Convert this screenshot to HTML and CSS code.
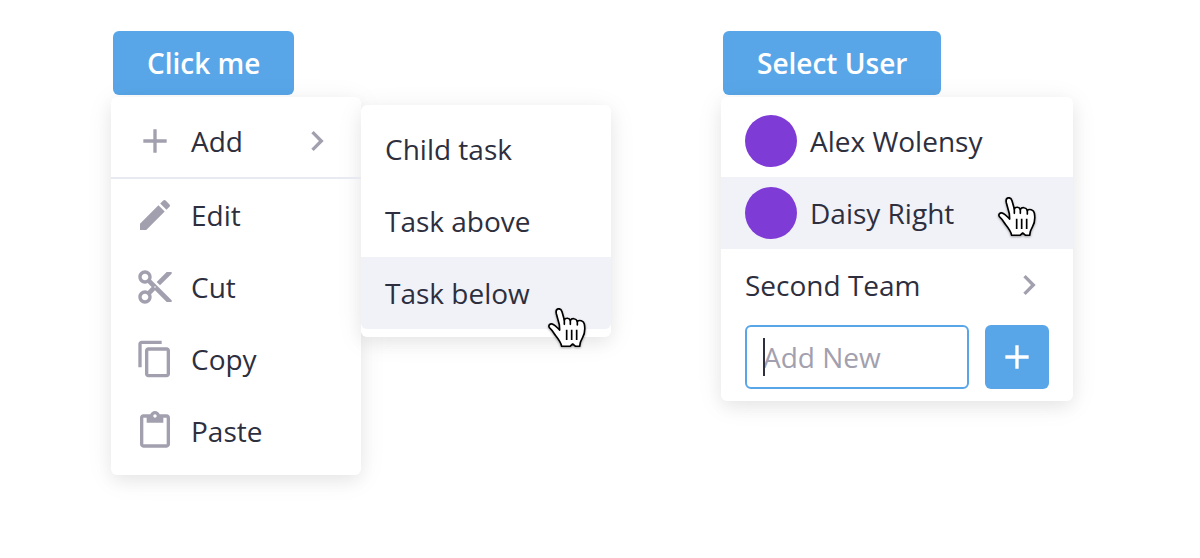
FILE: index.html
```html
<!DOCTYPE html>
<html lang="en">
<head>
    <meta charset="UTF-8">
    <meta name="viewport" content="width=device-width, initial-scale=1.0">
    <title>Dropdown menus</title>
    <link rel="stylesheet" href="styles.css">
</head>
<body>
    <!-- shared icons -->
    <svg class="sprite" aria-hidden="true">
        <symbol id="icon-plus" viewBox="0 0 24 24">
            <path d="M19 13h-6v6h-2v-6H5v-2h6V5h2v6h6z"/>
        </symbol>
        <symbol id="icon-chevron" viewBox="0 0 24 24">
            <path d="M8.59 16.59L13.17 12 8.59 7.41 10 6l6 6-6 6z"/>
        </symbol>
        <symbol id="icon-hand" viewBox="20 20 120 120">
            <path d="M48 40C44 23 61 21 65 34L72 59C75 52 87 52 90 60C94 53 107 53 111 63C117 58 130 61 132 71C135 88 133 101 127 111C121 121 118 127 118 138H106L97 131L89 138H64C62 126 53 115 45 105C40 97 36 90 30 85C20 77 29 67 40 73C47 77 51 83 58 89L57 73Z" fill="#fff" stroke="#000" stroke-width="5" stroke-linejoin="round"/>
            <path d="M72 58v14M90 59v13M111 63v11" fill="none" stroke="#000" stroke-width="5" stroke-linecap="round"/>
            <path d="M79 88v31M94 88v31M109 88v31" fill="none" stroke="#000" stroke-width="5"/>
        </symbol>
    </svg>

    <main class="demos">
        <section class="dropdown">
            <button type="button" class="btn">Click me</button>
            <div class="menus">
                <ul class="menu">
                    <li class="separated">
                        <button type="button" class="item">
                            <svg class="icon"><use href="#icon-plus"/></svg>
                            <span class="label">Add</span>
                            <svg class="icon"><use href="#icon-chevron"/></svg>
                        </button>
                    </li>
                    <li>
                        <button type="button" class="item">
                            <svg class="icon" viewBox="0 0 24 24"><path d="M3 17.25V21h3.75L17.81 9.94l-3.75-3.75L3 17.25zM20.71 7.04a.996.996 0 0 0 0-1.41l-2.34-2.34a.996.996 0 0 0-1.41 0l-1.83 1.83 3.75 3.75 1.83-1.83z"/></svg>
                            <span class="label">Edit</span>
                        </button>
                    </li>
                    <li>
                        <button type="button" class="item">
                            <svg class="icon" viewBox="0 0 24 24"><path d="M9.64 7.64c.23-.5.36-1.05.36-1.64 0-2.21-1.79-4-4-4S2 3.79 2 6s1.79 4 4 4c.59 0 1.14-.13 1.64-.36L10 12l-2.36 2.36C7.14 14.13 6.59 14 6 14c-2.21 0-4 1.79-4 4s1.79 4 4 4 4-1.79 4-4c0-.59-.13-1.14-.36-1.64L12 14l7 7h3v-1L9.64 7.64zM6 8c-1.1 0-2-.89-2-2s.9-2 2-2 2 .89 2 2-.9 2-2 2zm0 12c-1.1 0-2-.89-2-2s.9-2 2-2 2 .89 2 2-.9 2-2 2zm6-7.5c-.28 0-.5-.22-.5-.5s.22-.5.5-.5.5.22.5.5-.22.5-.5.5zM19 3l-6 6 2 2 7-7V3z"/></svg>
                            <span class="label">Cut</span>
                        </button>
                    </li>
                    <li>
                        <button type="button" class="item">
                            <svg class="icon" viewBox="0 0 24 24"><path d="M16 1H4c-1.1 0-2 .9-2 2v14h2V3h12V1zm3 4H8c-1.1 0-2 .9-2 2v14c0 1.1.9 2 2 2h11c1.1 0 2-.9 2-2V7c0-1.1-.9-2-2-2zm0 16H8V7h11v14z"/></svg>
                            <span class="label">Copy</span>
                        </button>
                    </li>
                    <li>
                        <button type="button" class="item">
                            <svg class="icon" viewBox="0 0 24 24"><path d="M19 2h-4.18C14.4.84 13.3 0 12 0c-1.3 0-2.4.84-2.82 2H5c-1.1 0-2 .9-2 2v16c0 1.1.9 2 2 2h14c1.1 0 2-.9 2-2V4c0-1.1-.9-2-2-2zm-7 0c.55 0 1 .45 1 1s-.45 1-1 1-1-.45-1-1 .45-1 1-1zm7 18H5V4h2v3h10V4h2v16z"/></svg>
                            <span class="label">Paste</span>
                        </button>
                    </li>
                </ul>
                <ul class="menu submenu">
                    <li><button type="button" class="item"><span class="label">Child task</span></button></li>
                    <li><button type="button" class="item"><span class="label">Task above</span></button></li>
                    <li>
                        <button type="button" class="item active rounded"><span class="label">Task below</span></button>
                        <svg class="pointer pointer-low"><use href="#icon-hand"/></svg>
                    </li>
                </ul>
            </div>
        </section>

        <section class="dropdown">
            <button type="button" class="btn">Select User</button>
            <div class="menu menu-wide">
                <ul class="list">
                    <li>
                        <button type="button" class="item user">
                            <span class="avatar"></span>
                            <span class="label">Alex Wolensy</span>
                        </button>
                    </li>
                    <li>
                        <button type="button" class="item user active">
                            <span class="avatar"></span>
                            <span class="label">Daisy Right</span>
                        </button>
                        <svg class="pointer pointer-mid"><use href="#icon-hand"/></svg>
                    </li>
                    <li>
                        <button type="button" class="item">
                            <span class="label">Second Team</span>
                            <svg class="icon"><use href="#icon-chevron"/></svg>
                        </button>
                    </li>
                </ul>
                <form class="add-form">
                    <div class="field">
                        <input type="text" placeholder="Add New" aria-label="Add new">
                        <span class="caret"></span>
                    </div>
                    <button type="button" class="btn btn-icon" aria-label="Add">
                        <svg class="icon"><use href="#icon-plus"/></svg>
                    </button>
                </form>
            </div>
        </section>
    </main>
</body>
</html>
```
FILE: styles.css
```css
* {
    box-sizing: border-box;
}
body {
    margin: 0;
    background-color: #fff;
    color: #2e2f3e;
    font-family: "Open Sans", "Noto Sans", sans-serif;
    font-size: 28px;
    line-height: 38px;
}
button,
input {
    font: inherit;
    color: inherit;
}
.sprite {
    position: absolute;
    width: 0;
    height: 0;
}
.demos {
    display: flex;
    flex-wrap: wrap;
    align-items: flex-start;
    gap: 32px 110px;
    padding: 31px 24px 32px 111px;
}
.btn {
    display: block;
    height: 64px;
    margin: 0 0 2px 2px;
    padding: 0 34px;
    border: none;
    border-radius: 6px;
    background-color: #58a6e8;
    color: #fff;
    font-weight: 600;
    cursor: pointer;
}
.menus {
    display: flex;
    align-items: flex-start;
}
.menu {
    width: 250px;
    margin: 0;
    padding: 8px 0;
    list-style: none;
    border-radius: 6px;
    background-color: #fff;
    box-shadow: 0 6px 16px rgba(0, 0, 0, 0.05), 0 4px 28px rgba(0, 0, 0, 0.07);
}
.menu-wide {
    width: 352px;
    padding-bottom: 12px;
}
.submenu {
    margin-top: 8px;
}
.list {
    margin: 0;
    padding: 0;
    list-style: none;
}
.menu li {
    position: relative;
}
.separated {
    border-bottom: 2px solid #e8eaf1;
}
.item {
    display: flex;
    align-items: center;
    gap: 16px;
    width: 100%;
    height: 72px;
    padding: 0 24px;
    border: none;
    background: none;
    text-align: left;
    cursor: pointer;
}
.item.user {
    gap: 13px;
}
.item:hover,
.item.active {
    background-color: #f1f2f7;
}
.item.rounded {
    border-radius: 0 0 6px 6px;
}
.label {
    flex: 1;
    white-space: nowrap;
}
.icon {
    flex: none;
    display: block;
    width: 40px;
    height: 40px;
    fill: #a2a0ae;
}
.avatar {
    flex: none;
    width: 52px;
    height: 52px;
    border-radius: 50%;
    background-color: #7f3bd6;
}
.add-form {
    display: flex;
    gap: 16px;
    padding: 4px 24px 0;
}
.field {
    position: relative;
    flex: 1;
}
.field input {
    display: block;
    width: 100%;
    height: 64px;
    padding: 0 16px;
    border: 2px solid #58a6e8;
    border-radius: 6px;
    background-color: #fff;
    outline: none;
}
.field input::placeholder {
    color: #a2a0ae;
    opacity: 1;
}
/* text cursor at the start of the field */
.caret {
    position: absolute;
    top: 13px;
    left: 18px;
    width: 2px;
    height: 38px;
    background-color: #2e2f3e;
}
.btn-icon {
    width: 64px;
    margin: 0;
    padding: 0 12px;
}
.btn-icon .icon {
    fill: #fff;
}
/* mouse pointers lying over the hovered rows */
.pointer {
    position: absolute;
    z-index: 1;
    width: 40px;
    height: 40px;
    overflow: visible;
    pointer-events: none;
    filter: drop-shadow(0 1px 1px rgba(0, 0, 0, 0.35));
}
.pointer-low {
    top: 50px;
    right: 24px;
}
.pointer-mid {
    top: 19px;
    right: 36px;
}
```
